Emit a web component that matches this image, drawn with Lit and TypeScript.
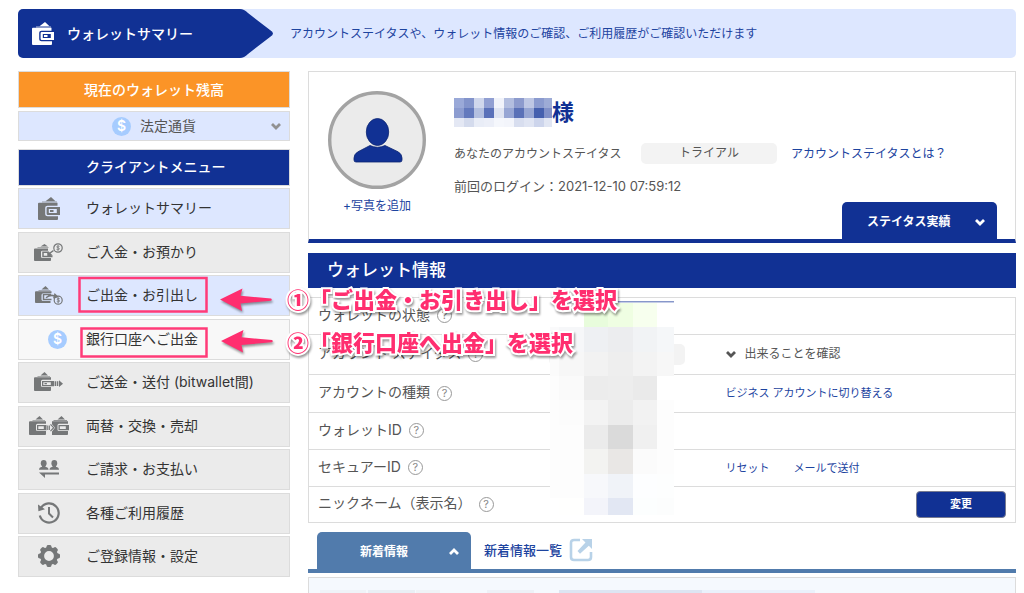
import { LitElement, html, css, svg, nothing } from "lit";
import { customElement } from "lit/decorators.js";

const purse = svg`
  <path d="M7.500 4.200 13 0l4.500 4.200z"/>
  <path d="M4 4.500h15v.9H4z" opacity=".7"/>
  <path d="M1 5.800h18.500v3H9.500q-2.300 0-2.300 2v6.400q0 2 2.300 2h10.500V22q0 1-1 1H1q-1 0-1-1V6.800q0-1 1-1z"/>
  <path fill-rule="evenodd" d="M9.800 10h12.200v8H9.800q-1.200 0-1.200-1.200v-5.600q0-1.200 1.200-1.200zm1 1.900v4.200h8v-4.200zM12 13h3.500v2H12z"/>`;

const smallPurse = svg`
  <path d="M6.500 3.500 10.500 0 14 3.500z"/>
  <path d="M3.500 4h12.500v.8H3.500z" opacity=".7"/>
  <path d="M1 5.200h16v2.600H8.500Q7 7.800 7 9.300v4.200Q7 15 8.500 15H17v3.200q0 .8-1 .8H1q-1 0-1-.8V6q0-.8 1-.8z"/>`;

const icons: Record<string, unknown> = {
  wallet: html`<svg width="22" height="23" viewBox="0 0 22 23" fill="currentColor" aria-hidden="true">${purse}</svg>`,
  deposit: html`<svg width="29" height="19" viewBox="0 0 29 19" fill="currentColor" aria-hidden="true">
    <path d="M6.500 3.500 10.500 1 14 3.500z"/><path d="M3.500 4.200h11v.8h-11z" opacity=".7"/>
    <path d="M1 5.500h13v2.200H8.500Q7 7.700 7 9v4.500Q7 15 8.500 15H17v2.300q0 .7-1 .7H1q-1 0-1-.7V6.300q0-.8 1-.8z"/>
    <path d="M19.500 7.500 14 11.500V9.200H9v4.300h9.500" fill="none" stroke="currentColor" stroke-width="1.500"/>
    <path d="m13.800 13.500.7-5 4.300 4z"/>
    <circle cx="24" cy="5" r="4.200" fill="none" stroke="currentColor" stroke-width="1.200"/>
    <path d="M25.500 3.400c-1-.8-3-.3-2.700.7.3.9 2.400.6 2.600 1.600.2 1-1.800 1.500-2.900.6M24 2.300v5.400" fill="none" stroke="currentColor" stroke-width=".9"/></svg>`,
  withdraw: html`<svg width="28" height="19" viewBox="0 0 28 19" fill="currentColor" aria-hidden="true">
    <path d="M6.500 3.500 10.500 0 14 3.500z"/><path d="M3.500 4h12v.8h-12z" opacity=".7"/>
    <path d="M1 5.200h15.500v2H8.500Q6.500 7.200 6.500 9v4.500q0 1.500 2 1.500h7V17H1q-1 0-1-.8V6q0-.8 1-.8z"/>
    <path d="M16 8.500H8.500v5h8M11 11.800q5-4.300 10-1" fill="none" stroke="currentColor" stroke-width="1.500"/>
    <path d="m19.500 7 4.500 4.300-6 1.200z"/>
    <circle cx="23.200" cy="14.200" r="4" fill="none" stroke="currentColor" stroke-width="1.200"/>
    <path d="M24.700 12.800c-1-.8-2.800-.3-2.600.6.3.9 2.400.5 2.500 1.500.2.900-1.700 1.400-2.800.6M23.200 11.600v5.200" fill="none" stroke="currentColor" stroke-width=".9"/></svg>`,
  transfer: html`<svg width="29" height="20" viewBox="0 0 29 20" fill="currentColor" aria-hidden="true">${smallPurse}
    <path fill-rule="evenodd" d="M8 9h12v5.200H8zm1.300 1.200v2.800h7.500v-2.800zM10.500 11h2.400v1.300h-2.400z"/>
    <path d="M20.600 9.300h1.500v4.700h-1.500zM22.800 9.300h1.500v4.700h-1.500zM25 8.300l4 3.400-4 3.400z"/></svg>`,
  exchange: html`<svg width="40" height="20" viewBox="0 0 40 20" fill="currentColor" aria-hidden="true">${smallPurse}
    <path fill-rule="evenodd" d="M8 9h9.500v5.200H8zm1.300 1.200v2.800h5.500v-2.800z"/>
    <path d="M18.200 9.500h1.200v4.500h-1.200zM20 9.500h.9v4.500H20z"/><path d="m21.500 8.300 3.200 3.400-3.200 3.400" fill="none" stroke="currentColor" stroke-width="1.200"/>
    <path d="M28.500 3.500 32.500 0 36 3.500zM24.500 4H38v.8H24.500z"/>
    <path d="M23 5.200h16v2.600h-9q-1.500 0-1.500 1.500v4.200q0 1.500 1.500 1.500h9v3.200q0 .8-1 .8H23v-3.500l3-3.800-3-3.500z"/>
    <path fill-rule="evenodd" d="M29.500 9H40v5.200H29.500zm1.300 1.200v2.800h6v-2.800z"/></svg>`,
  billing: html`<svg width="20" height="18" viewBox="0 0 20 18" fill="currentColor" aria-hidden="true">
    <ellipse cx="4.700" cy="3.200" rx="2.900" ry="3.200"/><path d="M0 9.800Q0 7.300 3 6.700V5h3.400v1.700q3.100.6 3.100 3.100z"/>
    <ellipse cx="15.300" cy="3.200" rx="2.900" ry="3.200"/><path d="M10.500 9.800q0-2.500 3.100-3.100V5H17v1.700q3 .6 3 3.100z"/>
    <path d="M0 12.500h20v1.900H6V18z"/></svg>`,
  history: html`<svg width="22" height="22" viewBox="0 0 22 22" fill="none" stroke="currentColor" stroke-width="2.200" aria-hidden="true">
    <path d="M3 5.800A9.600 9.600 0 1 1 1.800 13.500"/><path d="M0 2.500.4 9.300 7 7.200z" fill="currentColor" stroke="none"/>
    <path d="M11 5v6.500l4 4" stroke-width="2"/></svg>`,
  settings: html`<svg width="22" height="22" viewBox="0 0 22 22" aria-hidden="true">
    <circle cx="11" cy="11" r="6.900" fill="none" stroke="currentColor" stroke-width="4"/>
    <g fill="currentColor">${[0, 45, 90, 135, 180, 225, 270, 315].map(
      (a) => svg`<path d="M8 3.500 8.700 1q.3-1 1.300-1h2q1 0 1.300 1l.7 2.500z" transform="rotate(${a} 11 11)"/>`
    )}</g></svg>`,
  dollar: html`<span class="coin" aria-hidden="true">$</span>`,
};

const chevron = (up = false) => html`<svg class="chev" width="10" height="8" viewBox="0 0 10 8" aria-hidden="true">
  <path d=${up ? "M1 6 5 2l4 4" : "M1 2l4 4 4-4"} fill="none" stroke="currentColor" stroke-width="2.800"/></svg>`;

const menu = [
  { icon: "wallet", label: "ウォレットサマリー", tone: "active" },
  { icon: "deposit", label: "ご入金・お預かり", tone: "" },
  { icon: "withdraw", label: "ご出金・お引出し", tone: "active" },
  { icon: "dollar", label: "銀行口座へご出金", tone: "sub" },
  { icon: "transfer", label: "ご送金・送付 (bitwallet間)", tone: "" },
  { icon: "exchange", label: "両替・交換・売却", tone: "" },
  { icon: "billing", label: "ご請求・お支払い", tone: "" },
  { icon: "history", label: "各種ご利用履歴", tone: "" },
  { icon: "settings", label: "ご登録情報・設定", tone: "" },
];

const rows = [
  { label: "ウォレットの状態", value: nothing, action: nothing, size: "short" },
  {
    label: "アカウント ステイタス",
    value: html`<span class="pill"></span>`,
    action: html`<button class="expand">${chevron()}出来ることを確認</button>`,
    size: "tall",
  },
  { label: "アカウントの種類", value: nothing, action: html`<a href="#">ビジネス アカウントに切り替える</a>`, size: "medium" },
  { label: "ウォレットID", value: nothing, action: nothing, size: "" },
  { label: "セキュアーID", value: nothing, action: html`<a href="#">リセット</a><a href="#">メールで送付</a>`, size: "" },
  { label: "ニックネーム（表示名）", value: nothing, action: html`<button class="change">変更</button>`, size: "short" },
];

const nameMask = [
  ["9aa9d8", "8394cb", "d0d7ec", "919fd2", "f1f3fa", "b3bedf", "8d9bcd", "bec7e4", "8b9bcf", "9dabd6"],
  ["8c9cd0", "6379bd", "b3bfe0", "5a71b9", "dfe4f2", "97a6d4", "5a71b7", "97a6d3", "4560ae", "8090c8"],
  ["e4e8f4", "d4dbed", "e9edf7", "eceff8", "f5f7fc", "f3f5fb", "d8deef", "e0e5f3", "cdd5ec", "e1e6f3"],
];

const maskX = [0, 9, 34, 58, 83, 107, 124];
const maskY = [5, 29, 54, 78, 102, 127, 151, 176, 200, 217];
const valueMask = [
  ["ffffff", "ffffff", "e8fcdc", "effee2", "f7ffee", "ffffff"],
  ["fafafb", "f6f7f9", "eef0f3", "ecedef", "f1f3f5", "f5f7f9"],
  ["fbfbfb", "f7f7f7", "f2f2f2", "eeeeee", "f3f3f3", "f7f7f7"],
  ["fdfdfd", "fafafa", "ececec", "ededed", "eaeaea", "ffffff"],
  ["fdfdfd", "fcfcfc", "f3f3f3", "ececec", "f2f2f2", "fdfdfd"],
  ["fdfdfd", "fdfdfd", "ebebeb", "dadada", "f0f0f0", "fdfdfd"],
  ["fdfdfd", "fdfdfd", "f3f3f1", "e9e7e5", "fbfbfb", "fdfdfd"],
  ["fdfdfd", "fdfdfd", "f7f8fb", "f0f3f8", "fdfeff", "fdfefe"],
  ["ffffff", "fffffe", "f3f4fa", "e2e7f3", "fcfefe", "fcfdfd"],
];

@customElement("app-root")
export class AppRoot extends LitElement {
  static styles = css`
    :host {
      --navy: #113194;
      --pale: #dde7ff;
      --line: #dcdcdc;
      --link: #1d449f;
      --pink: #ff2e6f;
      display: block;
      position: relative;
      box-sizing: border-box;
      padding: 9px 8px 0 18px;
      background: #fff;
      color: #555;
      font-family: Inter, "Noto Sans CJK JP", sans-serif;
      font-size: 12px;
      line-height: 20px;
    }
    *, *::before, *::after { box-sizing: border-box; }
    h1, h2, p, ul, table { margin: 0; padding: 0; }
    button { font: inherit; color: inherit; border: 0; background: none; padding: 0; cursor: pointer; }
    a { color: var(--link); text-decoration: none; }
    svg { display: block; flex: none; }

    .banner { display: flex; align-items: stretch; height: 49px; border-radius: 5px; overflow: hidden; background: var(--pale); }
    .title { display: flex; align-items: center; gap: 13px; width: 222px; padding-left: 14px; background: var(--navy); color: #fff; font-size: 14px; font-weight: 500; }
    .point { color: var(--navy); }
    .lead { align-self: center; padding-left: 17px; color: var(--link); }

    .columns { display: grid; grid-template-columns: 272px minmax(0, 1fr); gap: 18px; padding-top: 13px; align-items: start; }

    .side { font-size: 14px; }
    .balance, .clients { display: flex; align-items: center; border: 1px solid var(--line); color: #fff; font-size: 14px; font-weight: 500; }
    .balance { height: 37px; justify-content: center; background: #fb9427; }
    .clients { height: 37px; margin-top: 8px; padding: 0 0 2px 67px; background: var(--navy); }
    .currency { display: flex; align-items: center; justify-content: center; position: relative; width: 100%; height: 30px; margin-top: 3px; gap: 9px; border: 1px solid var(--line); background: var(--pale); font-size: 14px; color: #555; }
    .currency .chev { position: absolute; right: 8px; color: #919191; }
    .coin { display: flex; align-items: center; justify-content: center; width: 19px; height: 19px; border-radius: 50%; background: #a6ccff; color: #fff; font-size: 14px; font-weight: 600; }
    .menu { list-style: none; }
    .menu li { height: 41px; margin-top: 3px; }
    .menu li:nth-child(odd) { margin-top: 2px; }
    .item { display: flex; align-items: center; height: 100%; gap: 8px; padding-bottom: 2px; border: 1px solid var(--line); background: #ebebeb; color: #333; }
    .active { background: var(--pale); }
    .sub { background: #f8f8f8; }
    .glyph { display: flex; justify-content: center; width: 59px; padding-top: 1px; color: #757778; }
    .sub .glyph { padding-left: 18px; }

    .profile { display: grid; grid-template-columns: 98px minmax(0, 1fr); grid-template-rows: auto 37px; column-gap: 28px; padding: 0 18px 0 19px; border: 1px solid var(--line); border-bottom: 4px solid var(--navy); }
    .photo { grid-row: 1 / 3; padding-top: 19px; text-align: center; }
    .avatar { margin-bottom: 7px; }
    .details { padding: 26px 0 6px; }
    .name { display: flex; align-items: center; height: 28px; color: var(--navy); font-size: 22px; font-weight: 700; }
    .status { display: flex; align-items: center; gap: 14px; margin: 17px 0 12px; }
    .status-label { min-width: 173px; }
    .login { font-size: 13px; }
    .pill { display: block; width: 136px; height: 21px; border-radius: 5px; background: #f3f3f3; text-align: center; }
    .results { justify-self: end; display: flex; align-items: center; justify-content: space-between; width: 155px; padding: 3px 12px 0 25px; border-radius: 5px 5px 0 0; background: var(--navy); color: #fff; font-weight: 700; }

    .heading { height: 35px; margin-top: 10px; padding-left: 19px; background: var(--navy); color: #fff; font-size: 17px; font-weight: 500; line-height: 35px; }
    .info { position: relative; margin-top: 9px; border: 1px solid var(--line); }
    table { width: 100%; table-layout: fixed; border-collapse: collapse; }
    .c1 { width: 34%; }
    .c2 { width: 25%; }
    th, td { height: 37px; padding: 0; text-align: left; font-weight: 400; vertical-align: middle; }
    tr + tr > * { border-top: 1px solid var(--line); }
    .short > * { height: 36px; }
    .tall > * { height: 40px; }
    .medium > * { height: 38px; }
    th { font-size: 14px; }
    .label { display: flex; align-items: center; gap: 7px; padding: 0 0 2px 9px; }
    .help { display: flex; align-items: center; justify-content: center; width: 15px; height: 15px; margin-top: 2px; border: 1px solid #999; border-radius: 50%; color: #888; font-size: 11px; line-height: 13px; }
    .act { display: flex; align-items: center; gap: 24px; font-size: 11px; }
    .expand { display: flex; align-items: center; gap: 9px; font-size: 12px; }
    .expand .chev { color: #555; }
    .change { width: 90px; height: 27px; margin: 0 9px 0 auto; border: 1px solid #777b91; border-radius: 4px; background: var(--navy); color: #fff; font-weight: 700; }
    .mask { position: absolute; top: 0; left: 34%; margin-left: 1px; }

    .news { display: flex; align-items: flex-start; gap: 13px; margin-top: 9px; padding-left: 9px; border-bottom: 4px solid #517bac; }
    .news-tab { display: flex; align-items: center; justify-content: space-between; width: 154px; height: 37px; padding: 3px 12px 0 43px; border-radius: 5px 5px 0 0; background: #517bac; color: #fff; font-weight: 700; }
    .news-link { display: flex; align-items: center; gap: 7px; padding-top: 6px; font-size: 13px; font-weight: 500; }
    .list { margin-top: 4px; padding: 12px 11px 0; border: 1px solid var(--line); border-bottom: 0; background: #f5f9fe; }

    .marks { position: absolute; top: 0; left: 0; pointer-events: none; }
    .note { position: absolute; left: 287px; color: var(--pink); font-family: "Noto Sans CJK JP", sans-serif; font-size: 22px; font-weight: 900; line-height: 32px; white-space: nowrap; pointer-events: none; -webkit-text-stroke: 4px #fff; paint-order: stroke fill; filter: drop-shadow(1px 2px 1px rgba(0, 0, 0, 0.4)); }
    .first { top: 282px; }
    .second { top: 325px; }
  `;

  render() {
    return html`
      <header class="banner">
        <h1 class="title">${icons.wallet}ウォレットサマリー</h1>
        <svg class="point" width="33" height="49" viewBox="0 0 33 49" aria-hidden="true">
          <path d="M0 0q4 0 8 4l22 17q6 3.500 0 7L8 45q-4 4-8 4z" fill="currentColor"/>
        </svg>
        <p class="lead">アカウントステイタスや、ウォレット情報のご確認、ご利用履歴がご確認いただけます</p>
      </header>
      <div class="columns">
        <nav class="side">
          <h2 class="balance">現在のウォレット残高</h2>
          <button class="currency">${icons.dollar}法定通貨${chevron()}</button>
          <h2 class="clients">クライアントメニュー</h2>
          <ul class="menu">
            ${menu.map((m) => html`<li><a class="item ${m.tone}" href="#"><span class="glyph">${icons[m.icon]}</span>${m.label}</a></li>`)}
          </ul>
        </nav>
        <main>
          <section class="profile">
            <div class="photo">
              <svg class="avatar" width="98" height="98" viewBox="0 0 98 98" aria-hidden="true">
                <circle cx="49" cy="49" r="47.300" fill="#ebebeb" stroke="#a3a3a3" stroke-width="3.400"/>
                <g fill="#113194" stroke="#0b2472" stroke-width=".8">
                  <ellipse cx="49.500" cy="41" rx="11.200" ry="13.500"/>
                  <path d="M42 54.500q7.500 3.500 15 0l13.500 6.500q3.500 2.500 3.500 6v2q0 2-2 2H28q-2 0-2-2v-2q0-3.500 3.500-6z"/>
                </g>
              </svg>
              <a href="#">+写真を追加</a>
            </div>
            <div class="details">
              <div class="name">
                <svg width="98" height="29" viewBox="0 0 98 29" shape-rendering="crispEdges" aria-hidden="true">
                  ${nameMask.map((r, y) => r.map((c, x) => svg`<rect x=${x * 10} y=${y * 10} width="10" height="10" fill="#${c}"/>`))}
                </svg>様
              </div>
              <div class="status">
                <span class="status-label">あなたのアカウントステイタス</span>
                <span class="pill">トライアル</span>
                <a href="#">アカウントステイタスとは？</a>
              </div>
              <p class="login">前回のログイン：2021-12-10 07:59:12</p>
            </div>
            <button class="results">ステイタス実績${chevron()}</button>
          </section>

          <h2 class="heading">ウォレット情報</h2>
          <div class="info">
            <table>
              <colgroup><col class="c1" /><col class="c2" /><col /></colgroup>
              <tbody>
                ${rows.map((r) => html`<tr class=${r.size}>
                  <th scope="row"><div class="label">${r.label}<button class="help" aria-label="ヘルプ">?</button></div></th>
                  <td>${r.value}</td>
                  <td><div class="act">${r.action}</div></td>
                </tr>`)}
              </tbody>
            </table>
            <svg class="mask" width="124" height="218" viewBox="0 0 124 218" shape-rendering="crispEdges" aria-hidden="true">
              <rect y="3" width="124" height="1" fill="#8797ca"/><rect y="4" width="124" height="1" fill="#c5cde6"/>
              ${valueMask.map((r, y) => r.map((c, x) => svg`<rect x=${maskX[x]} y=${maskY[y]} width=${maskX[x + 1] - maskX[x]} height=${maskY[y + 1] - maskY[y]} fill="#${c}"/>`))}
            </svg>
          </div>

          <section>
            <div class="news">
              <button class="news-tab">新着情報${chevron(true)}</button>
              <a class="news-link" href="#">新着情報一覧
                <svg width="24" height="24" viewBox="0 0 24 24" fill="none" aria-hidden="true">
                  <path d="M11 2H5Q2 2 2 5v14q0 3 3 3h14q3 0 3-3v-5" stroke="#b8d2e8" stroke-width="2.600"/>
                  <path d="M13 1h10v10l-3.200-3.200-8.800 8L8.500 13l8-8.500z" fill="#b8d2e8"/>
                </svg></a>
            </div>
            <div class="list">
              <svg width="496" height="3" viewBox="0 0 496 3" aria-hidden="true">
                <path d="M0 0h46v3H0z" fill="#eff3f8"/><path d="M48 0h47v3H48z" fill="#e9eff5"/><path d="M96 0h24v3H96z" fill="#eff3f7"/>
                <path d="M167 0h47v3h-47z" fill="#edf1f7"/><path d="M239 0h143v3H239z" fill="#dde5f2"/><path d="M382 0h113v3H382z" fill="#eaf1fb"/>
              </svg>
            </div>
          </section>
        </main>
      </div>

      <svg class="marks" width="290" height="370" viewBox="0 0 290 370" aria-hidden="true">
        <g fill="none" stroke="#ff3b78" stroke-width="2.500">
          <rect x="79.500" y="278" width="127" height="33.500"/><rect x="81.500" y="328.500" width="125" height="28"/>
        </g>
        <g fill="#ff2e6f" style="filter: drop-shadow(1px 2px 1px rgba(0,0,0,.4))">
          <path d="M220 299.500 242.500 288.500 240.500 295.800 271 298.600q1.500 1 0 2.200L240.500 303.500 242 311z"/>
          <path d="M221 341 243.500 330 241.500 337.300 272 340.100q1.500 1 0 2.200L241.500 345 243 352.500z"/>
        </g>
      </svg>
      <p class="note first">①「ご出金・お引き出し」を選択</p>
      <p class="note second">②「銀行口座へ出金」を選択</p>
    `;
  }
}
